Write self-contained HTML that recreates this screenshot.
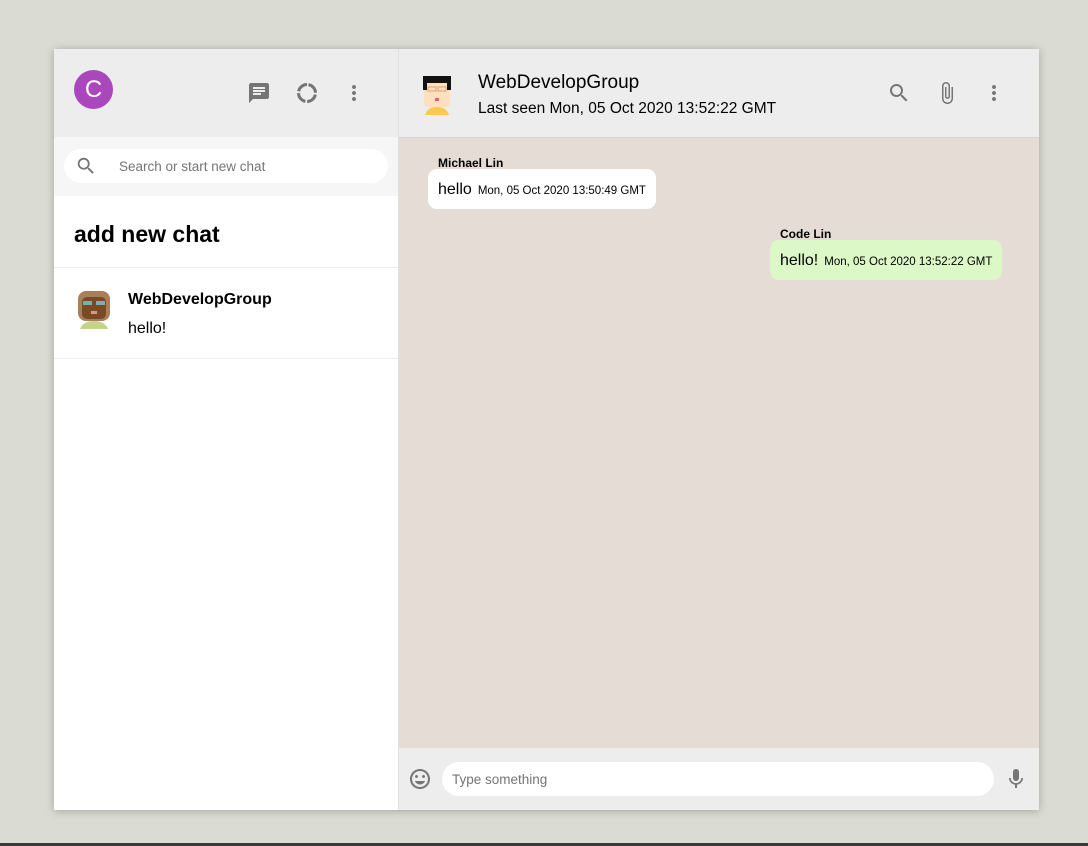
<!DOCTYPE html>
<html><head><meta charset="utf-8"><style>
*{box-sizing:border-box;margin:0;padding:0}
body{width:1088px;height:846px;background:#dadbd3;font-family:"Liberation Sans",sans-serif;position:relative;overflow:hidden}
.app{position:absolute;left:54px;top:49px;width:985px;height:761px;background:#fff;box-shadow:0 1px 8px rgba(0,0,0,.25);display:flex}
.side{width:345px;border-right:1px solid #e0e0e0;position:relative}
.sh{height:88px;background:#ededed;position:relative}
.av{position:absolute;left:20px;top:21px;width:39px;height:39px;border-radius:50%;background:#ab47bc;color:#fff;font-size:24px;text-align:center;line-height:39px}
.ic{position:absolute;fill:#757575}
.sr{height:59px;background:#f6f6f6;padding:12px 10px}
.si{height:34px;background:#fff;border-radius:17px;position:relative;font-size:13.5px;color:#757575;padding:10px 0 0 55px}
.add{height:72px;border-bottom:1px solid #eee;padding:25px 20px;font-size:23px;font-weight:bold}
.item{height:91px;border-bottom:1px solid #eee;position:relative}
.item b{position:absolute;left:74px;top:23px;font-size:16px}
.item span{position:absolute;left:74px;top:52px;font-size:16px}
.main{flex:1;position:relative;background:#e5ddd5}
.mh{height:89px;background:#ededed;border-bottom:1px solid #d6d6d6;position:relative}
.mh .t{position:absolute;left:79px;top:23px;font-size:19px}
.mh .s{position:absolute;left:79px;top:51px;font-size:15.5px}
.name{position:absolute;font-size:12px;font-weight:bold}
.msg{position:absolute;border-radius:9px;height:40px;padding:13px 10px;font-size:16px;line-height:16px}
.msg small{font-size:11.5px;margin-left:6px}
.ft{position:absolute;left:0;right:0;bottom:0;height:62px;background:#ededed}
.in{position:absolute;left:43px;top:14px;width:552px;height:34px;background:#fff;border-radius:17px;font-size:13.5px;color:#757575;padding:10px 0 0 10px}
</style></head><body>
<div class="app">
<div class="side">
 <div class="sh">
  <div class="av">C</div>
  <svg class="ic" style="left:193px;top:32px" width="24" height="24" viewBox="0 0 24 24"><path d="M20 2H4c-1.1 0-2 .9-2 2v18l4-4h14c1.1 0 2-.9 2-2V4c0-1.1-.9-2-2-2zM6 9h12v2H6V9zm8 5H6v-2h8v2zm4-6H6V6h12v2z"/></svg>
  <svg style="position:absolute;left:241px;top:32px" width="24" height="24" viewBox="0 0 24 24"><circle cx="12" cy="12" r="8.5" fill="none" stroke="#757575" stroke-width="3" stroke-dasharray="11.5 1.85" transform="rotate(-80 12 12)"/></svg>
  <svg class="ic" style="left:288px;top:32px" width="24" height="24" viewBox="0 0 24 24"><path d="M12 8c1.1 0 2-.9 2-2s-.9-2-2-2-2 .9-2 2 .9 2 2 2zm0 2c-1.1 0-2 .9-2 2s.9 2 2 2 2-.9 2-2-.9-2-2-2zm0 6c-1.1 0-2 .9-2 2s.9 2 2 2 2-.9 2-2-.9-2-2-2z"/></svg>
 </div>
 <div class="sr"><div class="si">
  <svg class="ic" style="left:11px;top:6px" width="22" height="22" viewBox="0 0 24 24"><path d="M15.5 14h-.79l-.28-.27A6.47 6.47 0 0016 9.5 6.5 6.5 0 109.5 16c1.61 0 3.09-.59 4.23-1.57l.27.28v.79l5 4.99L20.49 19l-4.99-5zm-6 0C7.01 14 5 11.99 5 9.5S7.01 5 9.5 5 14 7.01 14 9.5 11.99 14 9.5 14z"/></svg>
  Search or start new chat</div></div>
 <div class="add">add new chat</div>
 <div class="item">
  <svg style="position:absolute;left:22px;top:21px" width="36" height="40" viewBox="0 0 36 40"><path d="M4 40c2-6 8-8 14-8s12 2 14 8z" fill="#c5d38a"/><rect x="2" y="2" width="32" height="30" rx="8" fill="#a87f5a"/><rect x="6" y="8" width="24" height="22" rx="5" fill="#7a4a25"/><rect x="7" y="12" width="9" height="4" fill="#7fb0a8"/><rect x="20" y="12" width="9" height="4" fill="#7fb0a8"/><rect x="15" y="22" width="6" height="3" fill="#d49a8a"/></svg>
  <b>WebDevelopGroup</b><span>hello!</span>
 </div>
</div>
<div class="main">
 <div class="mh">
  <svg style="position:absolute;left:20px;top:24px" width="36" height="42" viewBox="0 0 36 42"><path d="M6 42c2-6 6-8 12-8s10 2 12 8z" fill="#fbc94e"/><rect x="5" y="6" width="26" height="28" rx="4" fill="#fde0bd"/><rect x="4" y="3" width="28" height="7" fill="#111"/><rect x="4" y="3" width="4" height="14" fill="#111"/><rect x="28" y="3" width="4" height="14" fill="#111"/><rect x="9" y="14" width="8" height="4" fill="none" stroke="#e0a06a"/><rect x="19" y="14" width="8" height="4" fill="none" stroke="#e0a06a"/><rect x="16" y="25" width="4" height="3" fill="#e0607a"/></svg>
  <div class="t">WebDevelopGroup</div>
  <div class="s">Last seen Mon, 05 Oct 2020 13:52:22 GMT</div>
  <svg class="ic" style="left:488px;top:32px" width="24" height="24" viewBox="0 0 24 24"><path d="M15.5 14h-.79l-.28-.27A6.47 6.47 0 0016 9.5 6.5 6.5 0 109.5 16c1.61 0 3.09-.59 4.23-1.57l.27.28v.79l5 4.99L20.49 19l-4.99-5zm-6 0C7.01 14 5 11.99 5 9.5S7.01 5 9.5 5 14 7.01 14 9.5 11.99 14 9.5 14z"/></svg>
  <svg class="ic" style="left:536px;top:32px" width="24" height="24" viewBox="0 0 24 24"><path d="M16.5 6v11.5c0 2.21-1.79 4-4 4s-4-1.79-4-4V5a2.5 2.5 0 015 0v10.5c0 .55-.45 1-1 1s-1-.45-1-1V6H10v9.5a2.5 2.5 0 005 0V5c0-2.21-1.79-4-4-4S7 2.79 7 5v12.5c0 3.04 2.46 5.5 5.5 5.5s5.5-2.46 5.5-5.5V6h-1.5z"/></svg>
  <svg class="ic" style="left:583px;top:32px" width="24" height="24" viewBox="0 0 24 24"><path d="M12 8c1.1 0 2-.9 2-2s-.9-2-2-2-2 .9-2 2 .9 2 2 2zm0 2c-1.1 0-2 .9-2 2s.9 2 2 2 2-.9 2-2-.9-2-2-2zm0 6c-1.1 0-2 .9-2 2s.9 2 2 2 2-.9 2-2-.9-2-2-2z"/></svg>
 </div>
 <div class="name" style="left:39px;top:107px">Michael Lin</div>
 <div class="msg" style="left:29px;top:120px;background:#fff">hello<small>Mon, 05 Oct 2020 13:50:49 GMT</small></div>
 <div class="name" style="left:381px;top:178px">Code Lin</div>
 <div class="msg" style="left:371px;top:191px;background:#dcf8c6">hello!<small>Mon, 05 Oct 2020 13:52:22 GMT</small></div>
 <div class="ft">
  <svg class="ic" style="left:9px;top:19px" width="24" height="24" viewBox="0 0 24 24"><path d="M11.99 2C6.47 2 2 6.48 2 12s4.47 10 9.99 10C17.52 22 22 17.52 22 12S17.52 2 11.99 2zM12 20c-4.42 0-8-3.58-8-8s3.58-8 8-8 8 3.58 8 8-3.58 8-8 8zm3.5-9c.83 0 1.5-.67 1.5-1.5S16.33 8 15.5 8 14 8.67 14 9.5s.67 1.5 1.5 1.5zm-7 0c.83 0 1.5-.67 1.5-1.5S9.33 8 8.5 8 7 8.67 7 9.5 7.67 11 8.5 11zm3.5 6.5c2.33 0 4.31-1.46 5.11-3.5H6.89c.8 2.04 2.78 3.5 5.11 3.5z"/></svg>
  <div class="in">Type something</div>
  <svg class="ic" style="left:605px;top:19px" width="24" height="24" viewBox="0 0 24 24"><path d="M12 14c1.66 0 2.99-1.34 2.99-3L15 5c0-1.66-1.34-3-3-3S9 3.34 9 5v6c0 1.66 1.34 3 3 3zm5.3-3c0 3-2.540 5.1-5.3 5.1S6.7 14 6.7 11H5c0 3.41 2.72 6.23 6 6.72V21h2v-3.28c3.28-.48 6-3.3 6-6.72h-1.7z"/></svg>
 </div>
</div>
</div>
<div style="position:absolute;left:0;right:0;bottom:0;height:3px;background:#3a3a3a"></div>
</body></html>
